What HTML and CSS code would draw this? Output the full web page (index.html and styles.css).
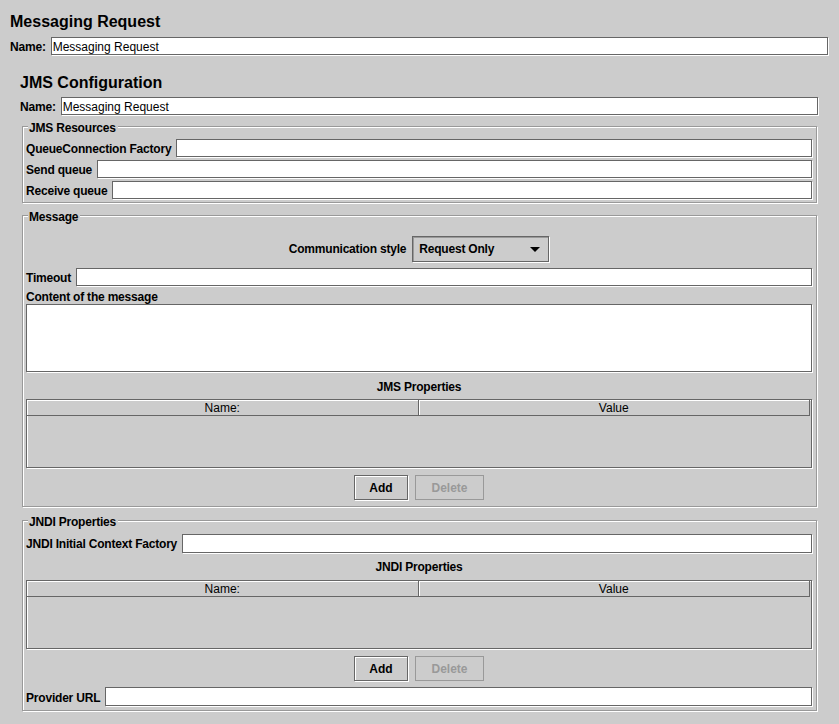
FILE: index.html
```html
<!DOCTYPE html>
<html>
<head>
<meta charset="utf-8">
<title>Messaging Request</title>
<link rel="stylesheet" href="styles.css">
</head>
<body>
<div class="page">
  <div class="title">Messaging Request</div>
  <div class="row top-name">
    <span class="lbl">Name:</span>
    <input class="field" type="text" value="Messaging Request">
  </div>

  <div class="jms">
    <div class="title jms-title">JMS Configuration</div>
    <div class="row jms-name">
      <span class="lbl">Name:</span>
      <input class="field" type="text" value="Messaging Request">
    </div>

    <div class="group g-res">
      <div class="legend">JMS Resources</div>
      <div class="rows res-rows">
        <div class="row"><span class="lbl">QueueConnection Factory</span><input class="field" type="text"></div>
        <div class="row"><span class="lbl">Send queue</span><input class="field" type="text"></div>
        <div class="row"><span class="lbl">Receive queue</span><input class="field" type="text"></div>
      </div>
    </div>

    <div class="group g-msg">
      <div class="legend">Message</div>
      <div class="combo-row">
        <span class="lbl">Communication style</span>
        <div class="combo">
          <span class="combo-text">Request Only</span>
          <span class="combo-arrow"></span>
        </div>
      </div>
      <div class="row timeout-row"><span class="lbl">Timeout</span><input class="field" type="text"></div>
      <div class="lbl content-lbl">Content of the message</div>
      <div class="textarea"></div>
      <div class="lbl center-lbl props-lbl">JMS Properties</div>
      <div class="table">
        <div class="thead">
          <div class="th">Name:</div>
          <div class="th">Value</div>
        </div>
      </div>
      <div class="buttons">
        <button class="btn">Add</button>
        <button class="btn btn-disabled">Delete</button>
      </div>
    </div>

    <div class="group g-jndi">
      <div class="legend">JNDI Properties</div>
      <div class="row jndi-row"><span class="lbl">JNDI Initial Context Factory</span><input class="field" type="text"></div>
      <div class="lbl center-lbl jndi-lbl">JNDI Properties</div>
      <div class="table table-jndi">
        <div class="thead">
          <div class="th">Name:</div>
          <div class="th">Value</div>
        </div>
      </div>
      <div class="buttons">
        <button class="btn">Add</button>
        <button class="btn btn-disabled">Delete</button>
      </div>
      <div class="row provider-row"><span class="lbl">Provider URL</span><input class="field" type="text"></div>
    </div>
  </div>
</div>
</body>
</html>
```

FILE: styles.css
```css
html, body {
  margin: 0;
  padding: 0;
  background: #cccccc;
}

body {
  font-family: "Liberation Sans", Arial, sans-serif;
  font-size: 12px;
  color: #000;
  width: 839px;
  height: 724px;
  overflow: hidden;
}

.page {
  padding: 12px 11px 0 10px;
}

.title {
  font-size: 16px;
  font-weight: bold;
  line-height: 20px;
  height: 20px;
}

.row {
  display: flex;
  align-items: center;
  gap: 5px;
  height: 18px;
}

.lbl {
  font-weight: bold;
  font-size: 12px;
  line-height: 14px;
  letter-spacing: -0.2px;
  white-space: nowrap;
}

.row .lbl {
  padding-top: 1px;
}

.field {
  flex: 1;
  min-width: 0;
  height: 18px;
  box-sizing: border-box;
  margin: 0;
  padding: 1px 1px 0 1px;
  border: 1px solid #666666;
  background: #ffffff;
  box-shadow: 1px 1px 0 #ffffff;
  font-family: "Liberation Sans", Arial, sans-serif;
  font-size: 12px;
  color: #000;
  outline: none;
}

.top-name {
  margin-top: 5px;
}

.jms {
  margin: 18px 10px 0 10px;
}

.jms-name {
  margin-top: 4px;
}

.group {
  display: flex;
  flex-direction: column;
  border: 1px solid #999999;
  box-shadow: 1px 1px 0 #ffffff, inset 1px 1px 0 #ffffff;
  margin: 0 1px 0 2px;
  padding: 0 4px 0 3px;
}

.legend {
  align-self: flex-start;
  margin: -6px 0 0 2px;
  padding: 0 2px 0 1px;
  background: #cccccc;
  font-weight: bold;
  line-height: 14px;
  height: 14px;
  letter-spacing: -0.2px;
}

.g-res {
  margin-top: 11px;
  padding-bottom: 3px;
}

.rows {
  display: flex;
  flex-direction: column;
  gap: 3px;
  margin-top: 4px;
}

.g-msg {
  margin-top: 12px;
  padding-bottom: 6px;
}

.combo-row {
  display: flex;
  justify-content: center;
  align-items: center;
  gap: 6px;
  margin-top: 12px;
}

.combo {
  width: 137px;
  height: 26px;
  box-sizing: border-box;
  border: 1px solid #666666;
  box-shadow: 1px 1px 0 #ffffff, inset 1px 1px 0 #999999;
  background: #cccccc;
  display: flex;
  align-items: center;
  justify-content: space-between;
  padding: 0 8px 0 6px;
}

.combo-text {
  font-weight: bold;
  font-size: 12px;
  letter-spacing: -0.2px;
}

.combo-arrow {
  width: 0;
  height: 0;
  border-left: 5px solid transparent;
  border-right: 5px solid transparent;
  border-top: 5px solid #000000;
}

.timeout-row {
  margin-top: 6px;
}

.content-lbl {
  margin-top: 4px;
  height: 14px;
}

.textarea {
  margin-top: 0;
  height: 68px;
  box-sizing: border-box;
  border: 1px solid #666666;
  background: #ffffff;
  box-shadow: 1px 1px 0 #ffffff;
}

.center-lbl {
  text-align: center;
  height: 14px;
}

.props-lbl {
  margin-top: 8px;
}

.table {
  margin-top: 5px;
  height: 69px;
  box-sizing: border-box;
  border: 1px solid #666666;
  box-shadow: 1px 1px 0 #ffffff, inset 1px 1px 0 #ffffff;
  background: #cccccc;
}

.table-jndi {
  margin-top: 6px;
  height: 69px;
}

.thead {
  display: flex;
  margin-right: 1px;
  height: 16px;
}

.th {
  flex: 1;
  box-sizing: border-box;
  height: 16px;
  padding-top: 1px;
  border-right: 1px solid #666666;
  border-bottom: 1px solid #666666;
  box-shadow: inset 1px 1px 0 #ffffff;
  text-align: center;
  font-size: 12px;
  line-height: 15px;
  color: #000;
}

.buttons {
  display: flex;
  justify-content: center;
  gap: 7px;
  margin-top: 7px;
}

.btn {
  margin: 0;
  height: 25px;
  box-sizing: border-box;
  padding: 0;
  border: 1px solid #666666;
  background: #cccccc;
  box-shadow: 1px 1px 0 #ffffff, inset 1px 1px 0 #ffffff;
  font-family: "Liberation Sans", Arial, sans-serif;
  font-weight: bold;
  font-size: 12px;
  color: #000;
  width: 54px;
}

.btn-disabled {
  width: 69px;
  border-color: #999999;
  box-shadow: none;
  color: #999999;
}

.g-jndi {
  margin-top: 13px;
  padding-bottom: 4px;
}

.jndi-row {
  margin-top: 5px;
  height: 19px;
}

.jndi-row .field {
  height: 19px;
}

.jndi-lbl {
  margin-top: 7px;
}

.provider-row {
  margin-top: 6px;
  height: 19px;
}

.provider-row .lbl {
  padding-top: 2px;
}

.provider-row .field {
  height: 19px;
}
```
